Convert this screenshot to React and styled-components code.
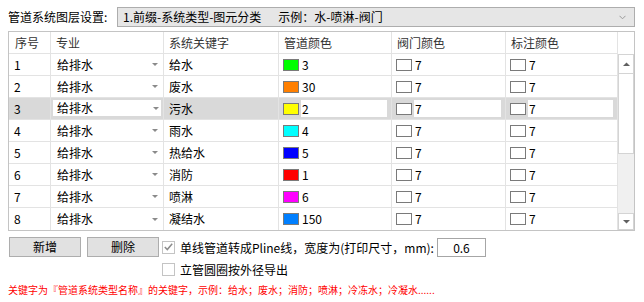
import React from 'react';
import styled, { createGlobalStyle } from 'styled-components';

const Global = createGlobalStyle`
  html, body { margin: 0; padding: 0; background: #fff; }
  body {
    font-family: "Noto Sans CJK SC", "Microsoft YaHei", sans-serif;
    font-size: 12px;
    color: #000;
  }
  * { box-sizing: border-box; }
`;

const Page = styled.div`
  width: 644px;
  height: 302px;
  padding: 7px 9px 0 8px;
  display: flex;
  flex-direction: column;
  overflow: hidden;
`;

const TopBar = styled.div`
  display: flex;
  align-items: center;
  height: 20px;
`;

const Title = styled.div`
  width: 109px;
  font-size: 12px;
  line-height: 20px;
  white-space: nowrap;
`;

const Combo = styled.div`
  flex: 1;
  height: 20px;
  border: 1px solid #adadad;
  background: #e6e6e6;
  display: flex;
  align-items: center;
  padding: 0 8px 0 5px;
  line-height: 18px;
  white-space: nowrap;
`;

const ComboText = styled.span`
  margin-right: ${p => p.$gap || 0}px;
`;

const ComboArrow = styled.svg`
  margin-left: auto;
  width: 7px;
  height: 5px;
`;

const Table = styled.div`
  margin-top: 4px;
  width: 627px;
  border: 1px solid #c4c4c4;
  display: flex;
`;

const Grid = styled.div`
  display: grid;
  grid-template-columns: 42px 113px 115px 113px 114px 112px;
  grid-auto-rows: 22px;
`;

const Cell = styled.div`
  display: flex;
  align-items: center;
  padding-left: ${p => p.$pad ?? 5}px;
  border-right: 1px solid #e3e3e3;
  border-bottom: ${p => (p.$last ? 'none' : '1px solid #e3e3e3')};
  background: ${p => (p.$sel ? '#d9d9d9' : '#fff')};
  color: ${p => (p.$head ? '#333' : '#000')};
  line-height: 20px;
  white-space: nowrap;
  overflow: hidden;
`;

const Editor = styled.div`
  flex: 1;
  align-self: stretch;
  margin: 2px 2px 3px 2px;
  background: #fff;
  display: flex;
  align-items: center;
  padding-left: 4px;
`;

const ComboCellText = styled.span`
  flex: 1;
  padding-left: ${p => p.$pad || 0}px;
`;

const Tri = styled.span`
  width: 0;
  height: 0;
  border-left: 3px solid transparent;
  border-right: 3px solid transparent;
  border-top: 3px solid #8a8a8a;
  margin-right: ${p => p.$mr || 5}px;
`;

const Swatch = styled.span`
  flex: none;
  width: 16px;
  height: 12px;
  border: 1px solid #7a7a7a;
  background: ${p => p.$color || '#fff'};
`;

const SwatchValue = styled.span`
  padding-left: 3px;
`;

const ValueBox = styled.div`
  flex: 1;
  align-self: stretch;
  margin: 2px 4px 2px 2px;
  background: #fff;
  display: flex;
  align-items: center;
  padding-left: 1px;
`;

const Scroll = styled.div`
  width: 16px;
  display: flex;
  flex-direction: column;
  background: #f0f0f0;
`;

const ScrollHead = styled.div`
  height: 22px;
  background: #fff;
`;

const ScrollBtn = styled.div`
  height: ${p => p.$h}px;
  background: #fff;
  border: 1px solid #d4d4d4;
  display: flex;
  align-items: center;
  justify-content: center;
`;

const Thumb = styled.div`
  height: 80px;
  background: #fff;
  border: 1px solid #d4d4d4;
  border-top: none;
`;

const Track = styled.div`
  flex: 1;
`;

const Controls = styled.div`
  margin-top: 6px;
  display: flex;
  align-items: flex-start;
`;

const Buttons = styled.div`
  display: flex;
  gap: 6px;
  padding-left: 1px;
`;

const Button = styled.button`
  width: 72px;
  height: 20px;
  border: 1px solid #adadad;
  background: #e1e1e1;
  font-family: inherit;
  font-size: 12px;
  color: #000;
  padding: 0;
  line-height: 18px;
  margin: 0;
`;

const Options = styled.div`
  margin-left: 3px;
  display: flex;
  flex-direction: column;
  gap: 2px;
`;

const Option = styled.label`
  display: flex;
  align-items: center;
  height: 20px;
  white-space: nowrap;
`;

const Check = styled.span`
  width: 13px;
  height: 13px;
  border: 1px solid #c4c4c4;
  background: #fff;
  margin-right: 5px;
  display: flex;
  align-items: center;
  justify-content: center;
`;

const WidthInput = styled.div`
  margin-left: 3px;
  width: 49px;
  height: 19px;
  border: 1px solid #a6a6a6;
  display: flex;
  align-items: center;
  justify-content: center;
  line-height: 17px;
`;

const Note = styled.div`
  margin-top: 4px;
  font-size: 10px;
  color: #ff0000;
  line-height: 14px;
  white-space: nowrap;
`;

const rows = [
  { kw: '给水', color: '#00ff00', v: '3' },
  { kw: '废水', color: '#ff7f00', v: '30' },
  { kw: '污水', color: '#ffff00', v: '2', sel: true },
  { kw: '雨水', color: '#00ffff', v: '4' },
  { kw: '热给水', color: '#0000ff', v: '5' },
  { kw: '消防', color: '#ff0000', v: '1' },
  { kw: '喷淋', color: '#ff00ff', v: '6' },
  { kw: '凝结水', color: '#007fff', v: '150' },
];

const headers = ['序号', '专业', '系统关键字', '管道颜色', '阀门颜色', '标注颜色'];

function ColorCell({ color, value, sel, last }) {
  return (
    <Cell $sel={sel} $last={last} $pad={4}>
      <Swatch $color={color} />
      {sel ? <ValueBox>{value}</ValueBox> : <SwatchValue>{value}</SwatchValue>}
    </Cell>
  );
}

export default function App() {
  return (
    <>
      <Global />
      <Page>
        <TopBar>
          <Title>管道系统图层设置:</Title>
          <Combo>
            <ComboText $gap={17}>1.前缀-系统类型-图元分类</ComboText>
            <ComboText>示例：水-喷淋-阀门</ComboText>
            <ComboArrow viewBox="0 0 7 5">
              <path d="M0.5 0.8 L3.5 3.8 L6.5 0.8" fill="none" stroke="#9a9a9a" strokeWidth="1" />
            </ComboArrow>
          </Combo>
        </TopBar>

        <Table>
          <Grid>
            {headers.map((h, i) => (
              <Cell key={h} $head $pad={i === 0 ? 6 : 5}>{h}</Cell>
            ))}
            {rows.map((r, i) => {
              const last = i === rows.length - 1;
              return (
                <React.Fragment key={i}>
                  <Cell $sel={r.sel} $last={last} $pad={5}>{i + 1}</Cell>
                  <Cell $sel={r.sel} $last={last} $pad={r.sel ? 0 : 6}>
                    {r.sel ? (
                      <Editor>
                        <ComboCellText>给排水</ComboCellText>
                        <Tri $mr={2} />
                      </Editor>
                    ) : (
                      <>
                        <ComboCellText>给排水</ComboCellText>
                        <Tri $mr={5} />
                      </>
                    )}
                  </Cell>
                  <Cell $sel={r.sel} $last={last} $pad={5}>{r.kw}</Cell>
                  <ColorCell color={r.color} value={r.v} sel={r.sel} last={last} />
                  <ColorCell value="7" sel={r.sel} last={last} />
                  <ColorCell value="7" sel={r.sel} last={last} />
                </React.Fragment>
              );
            })}
          </Grid>
          <Scroll>
            <ScrollHead />
            <ScrollBtn $h={20}>
              <svg width="7" height="4" viewBox="0 0 7 4">
                <path d="M0 4 L3.5 0.5 L7 4 Z" fill="#606060" />
              </svg>
            </ScrollBtn>
            <Thumb />
            <Track />
            <ScrollBtn $h={17}>
              <svg width="7" height="4" viewBox="0 0 7 4">
                <path d="M0 0 L3.5 3.5 L7 0 Z" fill="#606060" />
              </svg>
            </ScrollBtn>
          </Scroll>
        </Table>

        <Controls>
          <Buttons>
            <Button>新增</Button>
            <Button>删除</Button>
          </Buttons>
          <Options>
            <Option>
              <Check>
                <svg width="9" height="8" viewBox="0 0 9 8">
                  <path d="M0.8 4 L3.3 6.6 L8.2 0.8" fill="none" stroke="#8c8c8c" strokeWidth="1.5" />
                </svg>
              </Check>
              单线管道转成Pline线，宽度为(打印尺寸，mm):
              <WidthInput>0.6</WidthInput>
            </Option>
            <Option>
              <Check />
              立管圆圈按外径导出
            </Option>
          </Options>
        </Controls>

        <Note>关键字为『管道系统类型名称』的关键字，示例：给水；废水；消防；喷淋；冷冻水；冷凝水......</Note>
      </Page>
    </>
  );
}
